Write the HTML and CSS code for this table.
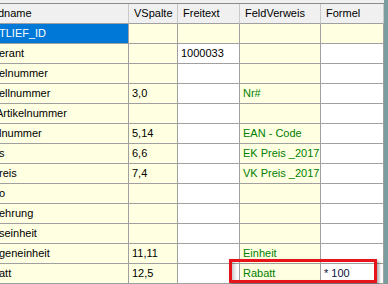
FILE: index.html
```html
<!DOCTYPE html>
<html>
<head>
<meta charset="utf-8">
<link rel="stylesheet" href="styles.css">
</head>
<body>
<div class="frame">
  <div class="grid">
    <div class="hd c1"><span class="clip">dname</span></div>
    <div class="hd">VSpalte</div>
    <div class="hd">Freitext</div>
    <div class="hd">FeldVerweis</div>
    <div class="hd">Formel</div>

    <div class="cell c1 sel"><span class="clip">TLIEF_ID</span></div>
    <div class="cell y"></div>
    <div class="cell y"></div>
    <div class="cell y"></div>
    <div class="cell y"></div>

    <div class="cell c1 y"><span class="clip">erant</span></div>
    <div class="cell y"></div>
    <div class="cell">1000033</div>
    <div class="cell y"></div>
    <div class="cell"></div>

    <div class="cell c1 y"><span class="clip">elnummer</span></div>
    <div class="cell y"></div>
    <div class="cell"></div>
    <div class="cell y"></div>
    <div class="cell"></div>

    <div class="cell c1 y"><span class="clip">ellnummer</span></div>
    <div class="cell y">3,0</div>
    <div class="cell"></div>
    <div class="cell y g">Nr#</div>
    <div class="cell"></div>

    <div class="cell c1 y"><span class="clip deep">Artikelnummer</span></div>
    <div class="cell y"></div>
    <div class="cell"></div>
    <div class="cell y"></div>
    <div class="cell"></div>

    <div class="cell c1 y"><span class="clip">lnummer</span></div>
    <div class="cell y">5,14</div>
    <div class="cell"></div>
    <div class="cell y g">EAN - Code</div>
    <div class="cell"></div>

    <div class="cell c1 y"><span class="clip">s</span></div>
    <div class="cell y">6,6</div>
    <div class="cell"></div>
    <div class="cell y g">EK Preis _2017</div>
    <div class="cell"></div>

    <div class="cell c1 y"><span class="clip">reis</span></div>
    <div class="cell y">7,4</div>
    <div class="cell"></div>
    <div class="cell y g">VK Preis _2017</div>
    <div class="cell"></div>

    <div class="cell c1 y"><span class="clip">o</span></div>
    <div class="cell y"></div>
    <div class="cell"></div>
    <div class="cell y"></div>
    <div class="cell"></div>

    <div class="cell c1 y"><span class="clip">ehrung</span></div>
    <div class="cell y"></div>
    <div class="cell"></div>
    <div class="cell y"></div>
    <div class="cell"></div>

    <div class="cell c1 y"><span class="clip">seinheit</span></div>
    <div class="cell y"></div>
    <div class="cell"></div>
    <div class="cell y"></div>
    <div class="cell"></div>

    <div class="cell c1 y"><span class="clip">geneinheit</span></div>
    <div class="cell y">11,11</div>
    <div class="cell"></div>
    <div class="cell y g">Einheit</div>
    <div class="cell"></div>

    <div class="cell c1 y"><span class="clip">att</span></div>
    <div class="cell y">12,5</div>
    <div class="cell"></div>
    <div class="cell y g">Rabatt</div>
    <div class="cell f">* 100</div>
  </div>
  <div class="mark"></div>
</div>
</body>
</html>
```
FILE: styles.css
```css
html, body {
  margin: 0;
  padding: 0;
}
body {
  width: 388px;
  height: 284px;
  overflow: hidden;
  background: #7a9e9e;
  font-family: "Liberation Sans", Arial, sans-serif;
  font-size: 11px;
  color: #000;
}
.frame {
  position: relative;
  width: 384px;
  height: 284px;
  background: #f0f0f0;
  padding-top: 3px;
  box-sizing: border-box;
}
.grid {
  display: grid;
  grid-template-columns: 129px 49px 62px 81px 63px;
  grid-auto-rows: 20px;
  border-top: 1px solid #8c8c8c;
  background: #fff;
}
.hd, .cell {
  box-sizing: border-box;
  border-right: 1px solid #a0a0a0;
  border-bottom: 1px solid #a0a0a0;
  display: flex;
  align-items: center;
  white-space: nowrap;
  overflow: hidden;
  line-height: 13px;
}
.hd {
  background: #f0f0f0;
  padding-left: 5px;
  border-right-color: #c8c8c8;
  border-bottom-color: #a0a0a0;
}
.cell {
  padding-left: 3px;
  background: #fff;
}
.c1 {
  padding-left: 0;
}
.clip {
  margin-left: -1px;
}
.clip.deep {
  margin-left: -4px;
}
.hd.c1 .clip {
  margin-left: -2px;
}
.y {
  background: #ffffe1;
}
.sel {
  background: #0078d7;
  color: #fff;
}
.g {
  color: #008000;
}
.f {
  color: #0a1440;
}
.mark {
  position: absolute;
  left: 229px;
  top: 259px;
  width: 148px;
  height: 24px;
  box-sizing: border-box;
  border: 3px solid #e8141c;
  box-shadow: 2px 2px 3px rgba(0, 0, 0, 0.35), inset 5px 0 4px -3px rgba(0, 0, 0, 0.25);
}
```
